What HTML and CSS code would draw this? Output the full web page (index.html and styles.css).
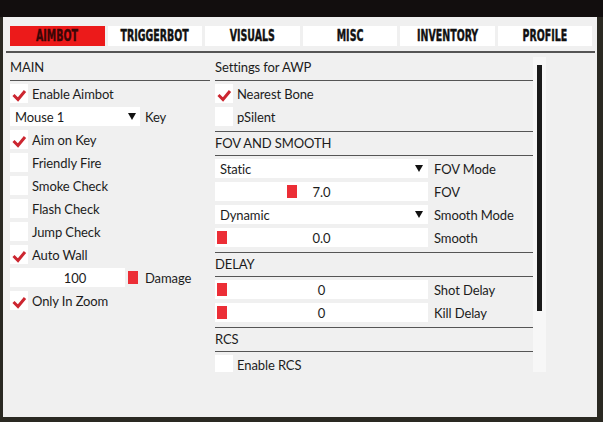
FILE: index.html
```html
<!DOCTYPE html>
<html>
<head>
<meta charset="utf-8">
<link rel="stylesheet" href="styles.css">
</head>
<body>
<div class="topbar"></div>
<div class="panel">
  <nav class="tabs">
    <div class="tab active"><span>AIMBOT</span></div>
    <div class="tab"><span>TRIGGERBOT</span></div>
    <div class="tab"><span>VISUALS</span></div>
    <div class="tab"><span>MISC</span></div>
    <div class="tab"><span>INVENTORY</span></div>
    <div class="tab"><span>PROFILE</span></div>
  </nav>
  <div class="tabline"></div>
  <div class="content">
    <section class="col-left">
      <div class="header">MAIN</div>
      <div class="group">
        <div class="row"><span class="check"><svg width="18" height="19" viewBox="0 0 18 19"><path d="M3.5 11 L8 15.5 L15 7" class="tick"/></svg></span><span>Enable Aimbot</span></div>
        <div class="row"><div class="select short"><span>Mouse 1</span><i class="arrow"></i></div><span class="side">Key</span></div>
        <div class="row"><span class="check"><svg width="18" height="19" viewBox="0 0 18 19"><path d="M3.5 11 L8 15.5 L15 7" class="tick"/></svg></span><span>Aim on Key</span></div>
        <div class="row"><span class="check"></span><span>Friendly Fire</span></div>
        <div class="row"><span class="check"></span><span>Smoke Check</span></div>
        <div class="row"><span class="check"></span><span>Flash Check</span></div>
        <div class="row"><span class="check"></span><span>Jump Check</span></div>
        <div class="row"><span class="check"><svg width="18" height="19" viewBox="0 0 18 19"><path d="M3.5 11 L8 15.5 L15 7" class="tick"/></svg></span><span>Auto Wall</span></div>
        <div class="row"><div class="slider short maxed">100<i class="handle" style="left:118px"></i></div><span class="side">Damage</span></div>
        <div class="row"><span class="check"><svg width="18" height="19" viewBox="0 0 18 19"><path d="M3.5 11 L8 15.5 L15 7" class="tick"/></svg></span><span>Only In Zoom</span></div>
      </div>
    </section>
    <section class="col-right">
      <div class="scroll">
        <div class="header">Settings for AWP</div>
        <div class="group">
          <div class="row"><span class="check"><svg width="18" height="19" viewBox="0 0 18 19"><path d="M3.5 11 L8 15.5 L15 7" class="tick"/></svg></span><span>Nearest Bone</span></div>
          <div class="row"><span class="check"></span><span>pSilent</span></div>
        </div>
        <div class="header sep">FOV AND SMOOTH</div>
        <div class="group">
          <div class="row"><div class="select wide"><span>Static</span><i class="arrow"></i></div><span class="side2">FOV Mode</span></div>
          <div class="row"><div class="slider wide">7.0<i class="handle" style="left:72px"></i></div><span class="side2">FOV</span></div>
          <div class="row"><div class="select wide"><span>Dynamic</span><i class="arrow"></i></div><span class="side2">Smooth Mode</span></div>
          <div class="row"><div class="slider wide">0.0<i class="handle" style="left:2px"></i></div><span class="side2">Smooth</span></div>
        </div>
        <div class="header sep">DELAY</div>
        <div class="group">
          <div class="row"><div class="slider wide">0<i class="handle" style="left:2px"></i></div><span class="side2">Shot Delay</span></div>
          <div class="row"><div class="slider wide">0<i class="handle" style="left:2px"></i></div><span class="side2">Kill Delay</span></div>
        </div>
        <div class="header sep">RCS</div>
        <div class="group">
          <div class="row"><span class="check"></span><span>Enable RCS</span></div>
        </div>
      </div>
      <div class="track"><div class="thumb"></div></div>
    </section>
  </div>
</div>
</body>
</html>
```
FILE: styles.css
```css
* { box-sizing: border-box; }
body {
  margin: 0;
  width: 603px;
  height: 422px;
  overflow: hidden;
  background: #2a2922;
  font-family: Lato, "Open Sans", sans-serif;
  font-size: 13px;
  letter-spacing: -0.1px;
  color: #1c1c1c;
}
.topbar { height: 17px; background: #120e0e; }
.panel {
  margin-left: 3px;
  width: 594px;
  height: 400px;
  background: #f0f0f0;
  padding-top: 9px;
}
.tabs {
  display: flex;
  gap: 3px;
  margin-left: 7px;
  width: 582px;
  height: 20px;
}
.tab {
  flex: 1;
  background: #fff;
  display: flex;
  align-items: center;
  justify-content: center;
  overflow: hidden;
}
.tab span {
  display: inline-block;
  font-family: "DejaVu Sans Condensed", "DejaVu Sans", sans-serif;
  font-weight: bold;
  font-size: 15px;
  line-height: 20px;
  letter-spacing: 0;
  transform: scaleX(0.7);
  color: #111;
  -webkit-text-stroke: 0.4px #111;
}
.tab.active { background: #ec1a1a; }
.tab.active span { color: #3a0606; -webkit-text-stroke: 0.4px #3a0606; }
.tabline {
  margin: 5px 0 0 3px;
  width: 589px;
  height: 2px;
  background: #555;
}
.content {
  display: flex;
  gap: 5px;
  margin: 4px 0 0 7px;
}
.col-left { width: 200px; }
.header {
  height: 24px;
  line-height: 21px;
  border-bottom: 1px solid #555;
}
.header.sep { border-top: 1px solid #555; height: 25px; line-height: 23px; }
.group {
  display: flex;
  flex-direction: column;
  gap: 4px;
  padding: 3px 0 5px;
}
.row {
  height: 19px;
  line-height: 21px;
  display: flex;
  align-items: flex-start;
  white-space: nowrap;
}
.check {
  width: 18px;
  height: 19px;
  background: #fff;
  margin-right: 4px;
  flex: none;
}
.check svg { display: block; }
.tick { fill: none; stroke: #cc2630; stroke-width: 3; }
.select {
  height: 19px;
  background: #fff;
  display: flex;
  align-items: flex-start;
  justify-content: space-between;
  padding: 0 4px 0 5px;
  flex: none;
}
.short { width: 130px; }
.wide { width: 213px; }
.arrow {
  margin-top: 6px;
  width: 0;
  height: 0;
  border-left: 4.5px solid transparent;
  border-right: 4.5px solid transparent;
  border-top: 7px solid #111;
}
.select.wide .arrow { margin-right: 1px; }
.side { margin-left: 5px; }
.side2 { margin-left: 6px; }
.slider {
  position: relative;
  height: 19px;
  background: #fff;
  text-align: center;
  flex: none;
}
.slider.maxed::after {
  content: "";
  position: absolute;
  right: 0;
  top: 0;
  width: 15px;
  height: 19px;
  background: #f0f0f0;
}
.handle {
  position: absolute;
  top: 3px;
  width: 10px;
  height: 13px;
  background: #ec2e36;
  z-index: 1;
}
.col-right {
  display: flex;
  height: 315px;
  overflow: hidden;
}
.scroll { width: 318px; }
.track {
  width: 13px;
  background: #f7f7f7;
  padding: 8px 4px 0;
}
.thumb { width: 5px; height: 246px; background: #1a1a1a; }
```
